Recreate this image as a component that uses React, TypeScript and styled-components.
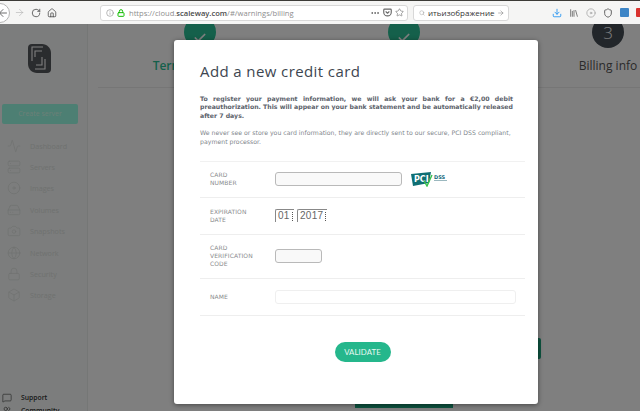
import styled, { createGlobalStyle } from 'styled-components';
import {
  Activity, ArrowLeft, ArrowRight, Box, Check, Disc, Download, Globe, HardDrive, Home, Info, Library,
  Lock, MessageSquare, MoreHorizontal, RotateCw, Search, Server, Shield, Star, Users, Camera, Pocket,
} from 'lucide-react';

const GlobalStyle = createGlobalStyle`
  html, body {
    margin: 0;
    padding: 0;
    width: 640px;
    height: 411px;
    overflow: hidden;
    background: #fff;
    font-family: "DejaVu Sans", sans-serif;
  }
`;

const Page = styled.div`
  position: relative;
  width: 640px;
  height: 411px;
  overflow: hidden;
  display: flex;
  flex-direction: column;
`;

const Toolbar = styled.header`
  flex: 0 0 24px;
  box-sizing: border-box;
  border-top: 1px solid #3c3b37;
  background: #f5f5f4;
  display: flex;
  align-items: center;
  color: #3f3f3f;
`;

const BackCircle = styled.div`
  width: 20px;
  height: 20px;
  margin-left: -10px;
  border: 1px solid #b5b5b5;
  border-radius: 50%;
  background: #fff;
  display: flex;
  align-items: center;
  justify-content: center;
  flex: none;
  padding-left: 6px;
  box-sizing: border-box;
`;

const NavIcons = styled.div`
  display: flex;
  align-items: center;
  gap: 6px;
  margin-left: 4px;
  width: 86px;
  flex: none;
`;

const UrlBar = styled.div`
  flex: none;
  width: 308px;
  height: 16px;
  box-sizing: border-box;
  background: #fff;
  border: 1px solid #d8d8d8;
  border-radius: 3px;
  display: flex;
  align-items: center;
  padding: 0 3px 0 5px;
  gap: 3px;
`;

const UrlText = styled.span`
  flex: 1;
  margin-left: 1px;
  font: 7.6px "Open Sans", sans-serif;
  color: #8d8d8d;
  white-space: nowrap;
  b {
    font-weight: 600;
    color: #4a4a4a;
  }
`;

const SearchBar = styled(UrlBar)`
  width: 96px;
  margin-left: 5px;
  justify-content: space-between;
`;

const SearchText = styled.span`
  font: 8px "Open Sans", sans-serif;
  color: #333;
  white-space: nowrap;
`;

const ToolIcons = styled.div`
  display: flex;
  align-items: center;
  gap: 7px;
  margin-left: 43px;
  flex: none;
`;

const Swatch = styled.span<{ $color: string }>`
  display: block;
  width: 9px;
  height: 9px;
  border-radius: 1px;
  background: ${(p) => p.$color};
`;

const Body = styled.div`
  position: relative;
  flex: 1;
  min-height: 0;
  display: flex;
`;

const Sidebar = styled.aside`
  flex: 0 0 88px;
  box-sizing: border-box;
  border-right: 1px solid #eaeeec;
  background: #f8fbfa;
  display: flex;
  flex-direction: column;
  overflow: hidden;
`;

const Logo = styled.svg`
  display: block;
  margin: 20px 0 0 28px;
  flex: none;
`;

const CreateButton = styled.div`
  flex: none;
  margin: 31px 0 0 2px;
  width: 76px;
  height: 20px;
  border-radius: 2px;
  background: #9affe6;
  color: #d8fff0;
  font: 7px/20px "Open Sans", sans-serif;
  text-align: center;
`;

const NavList = styled.nav`
  margin-top: 11px;
  display: flex;
  flex-direction: column;
  flex: none;
`;

const NavRow = styled.div`
  height: 21.4px;
  display: flex;
  align-items: center;
  gap: 9px;
  padding-left: 7px;
  color: #dfe3e1;
  font: 7.2px "Open Sans", sans-serif;
  svg {
    flex: none;
  }
`;

const SupportList = styled.div`
  margin-top: auto;
  margin-bottom: -6px;
  display: flex;
  flex-direction: column;
`;

const SupportRow = styled.div`
  height: 13px;
  display: flex;
  align-items: center;
  gap: 9px;
  padding-left: 2px;
  color: #333;
  font: 600 6.8px "Open Sans", sans-serif;
`;

const Main = styled.main`
  flex: 1;
  min-width: 0;
  padding-left: 10px;
  display: flex;
  flex-direction: column;
  overflow: hidden;
  background: #fff;
`;

const Steps = styled.div`
  display: flex;
  height: 72px;
  margin-top: -8px;
  border-bottom: 1px solid #ececec;
  flex: none;
  box-sizing: border-box;
`;

const Step = styled.div`
  flex: 0 0 204px;
  display: flex;
  flex-direction: column;
  align-items: center;
`;

const StepCircle = styled.div<{ $done?: boolean }>`
  width: 32px;
  height: 32px;
  border-radius: 50%;
  background: ${(p) => (p.$done ? '#2bc197' : '#444c54')};
  color: #fff;
  display: flex;
  align-items: center;
  justify-content: center;
  font: 300 17px "Open Sans", sans-serif;
  svg {
    margin-top: 11px;
  }
`;

const StepLabel = styled.div<{ $done?: boolean }>`
  margin-top: 9px;
  font: ${(p) => (p.$done ? 600 : 400)} 12px "Open Sans", sans-serif;
  color: ${(p) => (p.$done ? '#2bc197' : '#555')};
  white-space: nowrap;
`;

const HiddenAction = styled.div`
  flex: none;
  margin-top: 250px;
  margin-left: 341px;
  width: 102px;
  height: 21px;
  border-radius: 2px;
  background: #1aa67f;
`;

const HiddenSubmit = styled.div`
  flex: none;
  margin-top: 28px;
  margin-left: 257px;
  width: 98px;
  height: 21px;
  background: #1aa67f;
`;

const Overlay = styled.div`
  position: absolute;
  inset: 0;
  background: rgba(0, 0, 0, 0.5);
  box-sizing: border-box;
  padding: 16px 0 0 174px;
`;

const Modal = styled.section`
  width: 364px;
  height: 364px;
  box-sizing: border-box;
  padding: 21px 13px 0 26px;
  background: #fff;
  border-radius: 3px;
  box-shadow: 0 1px 5px rgba(0, 0, 0, 0.45);
  display: flex;
  flex-direction: column;
`;

const Title = styled.h2`
  margin: 0;
  font: 400 15px/21px "Open Sans", sans-serif;
  letter-spacing: 0.4px;
  color: #3d4650;
`;

const Lead = styled.p`
  margin: 13px 12px 0 0;
  font: 700 6.2px/8.4px "DejaVu Sans", sans-serif;
  color: #5b616a;
  text-align: justify;
`;

const Note = styled.p`
  margin: 9px 10px 0 0;
  font: 400 6.2px/8.3px "DejaVu Sans", sans-serif;
  color: #81868c;
`;

const Form = styled.div`
  margin-top: 15px;
  border-top: 1px solid #f1f1f1;
`;

const Row = styled.div<{ $height: number }>`
  height: ${(p) => p.$height}px;
  box-sizing: border-box;
  border-bottom: 1px solid #eeeeee;
  display: flex;
  align-items: center;
`;

const Label = styled.label`
  flex: 0 0 75px;
  box-sizing: border-box;
  padding-left: 10px;
  font: 400 6px/8px "DejaVu Sans", sans-serif;
  letter-spacing: 0.1px;
  color: #8a8c8e;
  text-transform: uppercase;
`;

const Field = styled.div<{ $width: number; $flat?: boolean }>`
  width: ${(p) => p.$width}px;
  height: 14px;
  box-sizing: border-box;
  border: 1px solid ${(p) => (p.$flat ? '#efefef' : '#b9b9b9')};
  border-radius: 3px;
  background: ${(p) => (p.$flat ? '#fff' : '#f9f9f9')};
  flex: none;
`;

const Select = styled.div<{ $width: number }>`
  width: ${(p) => p.$width}px;
  height: 13px;
  box-sizing: border-box;
  border-top: 1px solid #888;
  border-left: 1px solid #888;
  border-radius: 2px 0 0 0;
  padding-left: 2px;
  margin-right: 3px;
  font: 400 10px/12px "Liberation Sans", sans-serif;
  letter-spacing: 0.3px;
  color: #666;
  display: flex;
  justify-content: space-between;
  span:last-child {
    width: 1px;
    height: 9px;
    margin-top: 2px;
    border-left: 1px dotted #555;
  }
`;

const PciLogo = styled.svg`
  display: block;
  margin-left: 9px;
  flex: none;
`;

const Validate = styled.button`
  align-self: center;
  margin: 26px 0 0 0;
  width: 56px;
  height: 20px;
  padding: 0;
  border: none;
  border-radius: 10px;
  background: #25b78c;
  color: #e8f7f2;
  font: 400 7.8px "Lato", "Open Sans", sans-serif;
  letter-spacing: 0.1px;
`;

const nav = [
  { label: 'Dashboard', Icon: Activity },
  { label: 'Servers', Icon: Server },
  { label: 'Images', Icon: Disc },
  { label: 'Volumes', Icon: HardDrive },
  { label: 'Snapshots', Icon: Camera },
  { label: 'Network', Icon: Globe },
  { label: 'Security', Icon: Lock },
  { label: 'Storage', Icon: Box },
];

export default function App() {
  return (
    <Page>
      <GlobalStyle />
      <Toolbar>
        <BackCircle>
          <ArrowLeft size={12} strokeWidth={1.5} />
        </BackCircle>
        <NavIcons>
          <ArrowRight size={11} strokeWidth={1.2} color="#aaa" />
          <RotateCw size={10} strokeWidth={1.8} />
          <Home size={10} strokeWidth={1.8} />
        </NavIcons>
        <UrlBar>
          <Info size={8} strokeWidth={1.5} color="#777" />
          <Lock size={8} strokeWidth={3} color="#12bc00" />
          <UrlText>
            https://cloud.<b>scaleway.com</b>/#/warnings/billing
          </UrlText>
          <MoreHorizontal size={10} color="#555" />
          <Pocket size={9} strokeWidth={3} color="#666" />
          <Star size={9} strokeWidth={1.4} color="#555" />
        </UrlBar>
        <SearchBar>
          <Search size={8} strokeWidth={1.5} color="#888" />
          <SearchText>итьизображение</SearchText>
          <ArrowRight size={10} strokeWidth={1.3} color="#555" />
        </SearchBar>
        <ToolIcons>
          <Download size={10} strokeWidth={2} color="#1b8ff0" />
          <Library size={10} strokeWidth={1.8} color="#555" />
          <Disc size={10} strokeWidth={2} color="#aaa" />
          <Shield size={10} strokeWidth={2.4} color="#666" />
          <Swatch $color="#3d85c6" />
          <Swatch $color="#d9322e" />
        </ToolIcons>
      </Toolbar>
      <Body>
        <Sidebar>
          <Logo width="23" height="29" viewBox="0 0 23 29">
            <path
              d="M4 0h10c5 0 9 4 9 9v16a4 4 0 0 1-4 4H9c-5 0-9-4-9-9V4a4 4 0 0 1 4-4z"
              fill="#55585c"
            />
            <path d="M4 17V3h11M7 13V7h7M17 15v10H7M14 13v8H8" fill="none" stroke="#fff" strokeWidth="1.1" />
          </Logo>
          <CreateButton>Create server</CreateButton>
          <NavList>
            {nav.map(({ label, Icon }) => (
              <NavRow key={label}>
                <Icon size={14} strokeWidth={1.2} />
                {label}
              </NavRow>
            ))}
          </NavList>
          <SupportList>
            <SupportRow>
              <MessageSquare size={10} strokeWidth={1.4} />
              Support
            </SupportRow>
            <SupportRow>
              <Users size={10} strokeWidth={1.4} />
              Community
            </SupportRow>
          </SupportList>
        </Sidebar>
        <Main>
          <Steps>
            <Step>
              <StepCircle $done>
                <Check size={14} strokeWidth={3} />
              </StepCircle>
              <StepLabel $done>Terms of service</StepLabel>
            </Step>
            <Step>
              <StepCircle $done>
                <Check size={14} strokeWidth={3} />
              </StepCircle>
            </Step>
            <Step>
              <StepCircle>3</StepCircle>
              <StepLabel>Billing info</StepLabel>
            </Step>
          </Steps>
          <HiddenAction />
          <HiddenSubmit />
        </Main>
        <Overlay>
          <Modal>
            <Title>Add a new credit card</Title>
            <Lead>
              To register your payment information, we will ask your bank for a €2,00 debit preauthorization. This will
              appear on your bank statement and be automatically released after 7 days.
            </Lead>
            <Note>
              We never see or store you card information, they are directly sent to our secure, PCI DSS compliant,
              payment processor.
            </Note>
            <Form>
              <Row $height={36}>
                <Label>
                  Card
                  <br />
                  Number
                </Label>
                <Field $width={127} />
                <PciLogo width="37" height="15" viewBox="0 0 37 15">
                  <path d="M0 2l20-2-2 11-16 3z" fill="#0f6f73" />
                  <text x="3" y="10" fontFamily="DejaVu Sans" fontWeight="700" fontSize="8" fill="#fff">
                    PCI
                  </text>
                  <path d="M13 9l3 5 5-11" fill="none" stroke="#35c24a" strokeWidth="1.4" />
                  <text x="23" y="7" fontFamily="DejaVu Sans" fontWeight="700" fontSize="5" fill="#12667a">
                    DSS
                  </text>
                  <rect x="23" y="8" width="13" height="1" fill="#9bb8bf" />
                </PciLogo>
              </Row>
              <Row $height={37}>
                <Label>
                  Expiration
                  <br />
                  Date
                </Label>
                <Select $width={19}>
                  <span>01</span>
                  <span />
                </Select>
                <Select $width={30}>
                  <span>2017</span>
                  <span />
                </Select>
              </Row>
              <Row $height={44}>
                <Label>
                  Card
                  <br />
                  Verification
                  <br />
                  Code
                </Label>
                <Field $width={47} />
              </Row>
              <Row $height={37}>
                <Label>Name</Label>
                <Field $width={241} $flat />
              </Row>
            </Form>
            <Validate>VALIDATE</Validate>
          </Modal>
        </Overlay>
      </Body>
    </Page>
  );
}
